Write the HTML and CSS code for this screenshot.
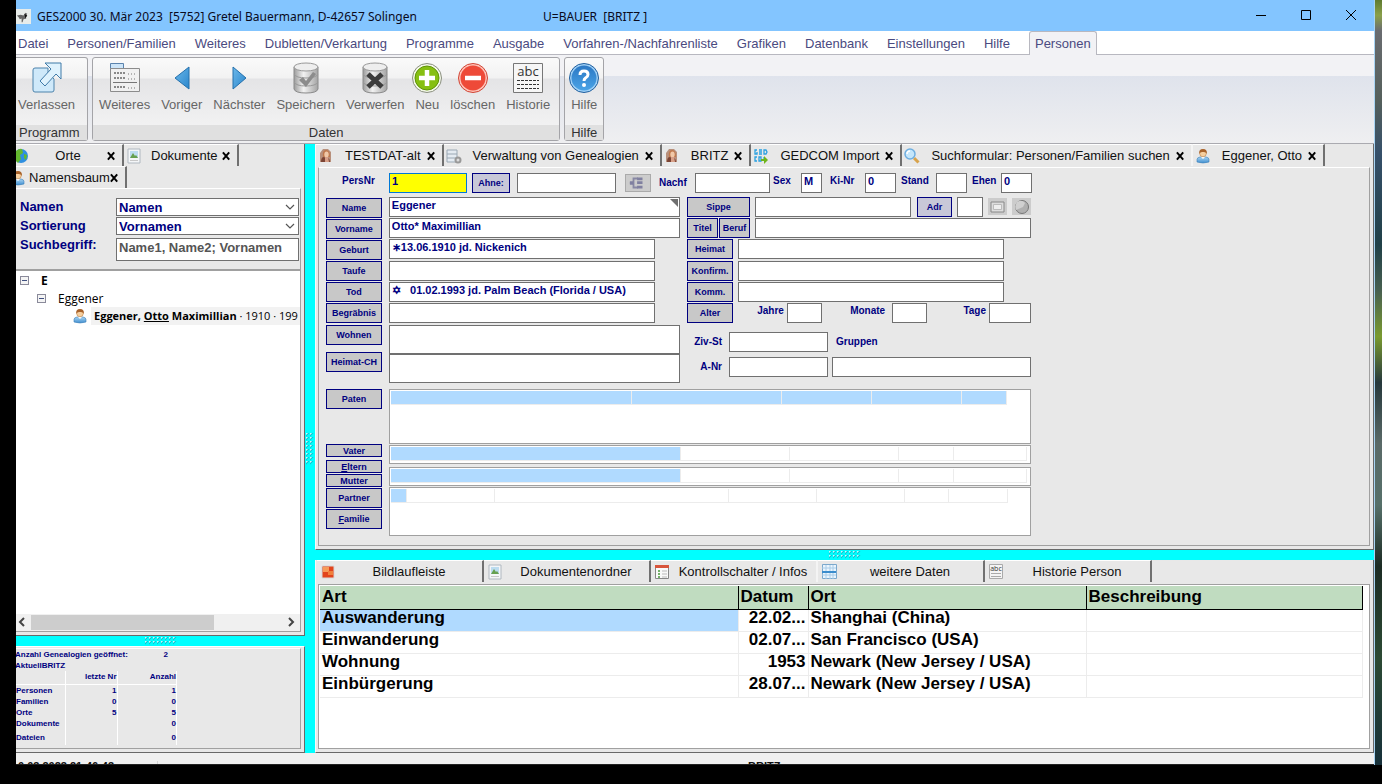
FILE: index.html
```html
<!DOCTYPE html>
<html lang="de">
<head>
<meta charset="utf-8">
<title>GES2000</title>
<link rel="stylesheet" href="styles.css">
</head>
<body>
<svg class="defs" aria-hidden="true">
  <defs>
    <linearGradient id="blueTri" x1="0" y1="0" x2="1" y2="1"><stop offset="0" stop-color="#6cb8ea"/><stop offset="1" stop-color="#2a86cc"/></linearGradient>
    <linearGradient id="cyl" x1="0" x2="1" y1="0" y2="0"><stop offset="0" stop-color="#9c9c9c"/><stop offset=".4" stop-color="#f2f2f2"/><stop offset="1" stop-color="#a4a4a4"/></linearGradient>
    <linearGradient id="helpG" x1="0" x2="0" y1="0" y2="1"><stop offset="0" stop-color="#2b78c4"/><stop offset="1" stop-color="#4aa3e6"/></linearGradient>
    <linearGradient id="shirt" x1="0" x2="0" y1="0" y2="1"><stop offset="0" stop-color="#a9d4f2"/><stop offset="1" stop-color="#3f8fd0"/></linearGradient>
  </defs>
  <symbol id="person" viewBox="0 0 16 16"><path d="M2 14V11.500Q2 9.500 5 9h6q3 .5 3 2.500V14q-6 2-12 0z" fill="url(#shirt)" stroke="#3c7fb8" stroke-width=".6"/><path d="M6 9l2 2 2-2z" fill="#fff"/><circle cx="8" cy="5.500" r="3.300" fill="#f6cf9f" stroke="#b87733" stroke-width=".5"/><path d="M4.300 6Q3.500 1 8 1t3.800 5Q11 3.500 8 4 5 3.500 4.300 6z" fill="#a8622a"/></symbol>
  <symbol id="portrait" viewBox="0 0 16 16"><path d="M2 14V5l3-4h5l3 3v10z" fill="#b8907c"/><path d="M3 14q0-4 2-5l5 1q2 1 2 4z" fill="#7c4434"/><path d="M5 9q-1-7 3-7t4 7z" fill="#c0784c"/><ellipse cx="8.500" cy="6.500" rx="2.200" ry="3" fill="#f0c8a8"/><path d="M7 9h3l1 5H7z" fill="#d8a088"/></symbol>
  <symbol id="picdoc" viewBox="0 0 16 16"><path d="M2 1h12v14H2z" fill="#f4f6f8" stroke="#b0b8c0"/><path d="M4 3h8v7H4z" fill="#bcdcf0"/><path d="M4 10l3-5 2 3 1-1 2 3z" fill="#66a050"/><path d="M4 12.500h8" stroke="#c8c8c8"/></symbol>
  <symbol id="close" viewBox="0 0 10 10"><path d="M1 1l7 8M8 1L1 9" stroke="#000" stroke-width="2.200"/></symbol>
  <symbol id="chev" viewBox="0 0 12 8"><path d="M2 2l4 4 4-4" fill="none" stroke="#555" stroke-width="1.200"/></symbol>
</svg>
<div class="desktop">
<div class="window">
  <header class="titlebar">
    <svg class="appicon" viewBox="0 0 16 16"><path d="M0 0h16v16H0z" fill="#e8ecea"/><path d="M1 7l4-1 3 1 2-3 2 1-2 3 1 2-3 1-1 3-1 0 0-4-2 1-1-2z" fill="#666"/><path d="M9 5l3 2-2 3z" fill="#111"/></svg>
    <span class="title">GES2000 30. Mär 2023&nbsp; [5752] Gretel Bauermann, D-42657 Solingen</span>
    <span class="user">U=BAUER&nbsp; [BRITZ ]</span>
    <div class="winbtns">
      <button aria-label="Minimieren"><svg viewBox="0 0 12 12"><path d="M1 6.500h10" stroke="#000"/></svg></button>
      <button aria-label="Maximieren"><svg viewBox="0 0 12 12"><path d="M1.500 1.500h9v9h-9z" fill="none" stroke="#000"/></svg></button>
      <button aria-label="Schließen"><svg viewBox="0 0 12 12"><path d="M1 1l10 10M11 1L1 11" stroke="#000"/></svg></button>
    </div>
  </header>
  <nav class="menu">
    <button>Datei</button><button>Personen/Familien</button><button>Weiteres</button><button>Dubletten/Verkartung</button><button>Programme</button><button>Ausgabe</button><button>Vorfahren-/Nachfahrenliste</button><button>Grafiken</button><button>Datenbank</button><button>Einstellungen</button><button>Hilfe</button><button class="active">Personen</button>
  </nav>
  <section class="ribbon">
    <div class="group first">
      <div class="tools">
        <button><svg viewBox="0 0 34 34"><path d="M3 9q0-2 2-2h13v5l6 6v11q0 2-2 2H5q-2 0-2-2z" fill="#cfe9fa" stroke="#4d83ac"/><path d="M15 2h16v16l-5-5-11 12-5-5 11-12z" fill="#dff2fd" stroke="#3f7aa8"/></svg>Verlassen</button>
      </div>
      <div class="caption">Programm</div>
    </div>
    <div class="group">
      <div class="tools wide">
        <button><svg viewBox="0 0 34 34"><path d="M2.500 2.500h13v6h-13z" fill="#cde5f8" stroke="#5b83ad"/><path d="M2.500 7.500h29v23h-29z" fill="#f0f0f0" stroke="#8c8c8c"/><path d="M5 21.500h24" stroke="#777"/><path d="M6 12h11M6 17h11M6 26h11" stroke="#888" stroke-width="2" stroke-dasharray="2 1"/><path d="M20 13h8M20 18h8M20 27h8" stroke="#777" stroke-dasharray="1 2"/></svg>Weiteres</button>
        <button><svg viewBox="0 0 34 34"><path d="M24 6v22L10 17z" fill="url(#blueTri)" stroke="#2470ac"/></svg>Voriger</button>
        <button><svg viewBox="0 0 34 34"><path d="M11 6v22l13-11z" fill="url(#blueTri)" stroke="#2470ac"/></svg>Nächster</button>
        <button><svg viewBox="0 0 34 34"><path d="M5 6v22q1 4 12 4t12-4V6z" fill="url(#cyl)" stroke="#8a8a8a"/><path d="M5 13q2 4 12 4t12-4M5 21q2 4 12 4t12-4" fill="none" stroke="#999"/><ellipse cx="17" cy="6" rx="12" ry="4" fill="#eee" stroke="#999"/><path d="M10 19l4-3 3 4 7-9 3 2-10 13z" fill="#8c8c8c"/></svg>Speichern</button>
        <button><svg viewBox="0 0 34 34"><path d="M5 6v22q1 4 12 4t12-4V6z" fill="url(#cyl)" stroke="#8a8a8a"/><path d="M5 13q2 4 12 4t12-4M5 21q2 4 12 4t12-4" fill="none" stroke="#999"/><ellipse cx="17" cy="6" rx="12" ry="4" fill="#eee" stroke="#999"/><path d="M10 13l14 13M24 13L10 26" stroke="#3c3c3c" stroke-width="5"/></svg>Verwerfen</button>
        <button><svg viewBox="0 0 34 34"><circle cx="17" cy="17" r="14.500" fill="#f4f8e8" stroke="#8a8f80"/><circle cx="17" cy="17" r="12" fill="#86bf12" stroke="#5f9408"/><path d="M17 9v16M9 17h16" stroke="#fff" stroke-width="4.500"/></svg>Neu</button>
        <button><svg viewBox="0 0 34 34"><circle cx="17" cy="17" r="14.500" fill="#ffc4ba" stroke="#d04434"/><circle cx="17" cy="17" r="12.500" fill="#ee4a38"/><path d="M9 17h16" stroke="#fff" stroke-width="4.500"/></svg>löschen</button>
        <button><svg viewBox="0 0 34 34"><path d="M2.500 2.500h29v29h-29z" fill="#f6f6f6" stroke="#777"/><text x="17" y="15" text-anchor="middle" class="abc">abc</text><path d="M6 19.500h22M6 23.500h22M6 27.500h22" stroke="#333" stroke-dasharray="3 1"/></svg>Historie</button>
      </div>
      <div class="caption">Daten</div>
    </div>
    <div class="group">
      <div class="tools">
        <button><svg viewBox="0 0 34 34"><circle cx="17" cy="17" r="14.500" fill="#9fd0f6" stroke="#205f9e"/><circle cx="17" cy="17" r="12.500" fill="url(#helpG)"/><path d="M13 14q0-4 4-4t4 3.500q0 2-2.500 3.500-1.500 1-1.500 3" fill="none" stroke="#fff" stroke-width="3"/><circle cx="17" cy="24" r="2" fill="#fff"/></svg>Hilfe</button>
      </div>
      <div class="caption">Hilfe</div>
    </div>
  </section>

  <main class="work">
    <div class="left">
      <section class="panel tree-panel">
        <div class="tabs">
          <div class="tab orte"><svg class="ic" viewBox="0 0 16 16"><circle cx="8" cy="8" r="7" fill="#2f8fe0"/><path d="M2 4q4-4 7-3l1 4-3 2 1 4-3 4-3-3zM11 6l3 1-1 5-2-2z" fill="#63b82e"/></svg><span>Orte</span><button class="x" aria-label="Orte schließen"><svg><use href="#close"/></svg></button></div>
          <div class="tab"><svg class="ic"><use href="#picdoc"/></svg><span>Dokumente</span><button class="x tight" aria-label="Dokumente schließen"><svg><use href="#close"/></svg></button></div>
        </div>
        <div class="tabs">
          <div class="tab names"><svg class="ic"><use href="#person"/></svg><span>Namensbaum</span><button class="x" aria-label="Namensbaum schließen"><svg><use href="#close"/></svg></button></div>
        </div>
        <div class="page tree-page">
          <div class="search">
            <label for="namen">Namen</label>
            <div class="combo"><select id="namen"><option>Namen</option></select><svg><use href="#chev"/></svg></div>
            <label for="sort">Sortierung</label>
            <div class="combo"><select id="sort"><option>Vornamen</option></select><svg><use href="#chev"/></svg></div>
            <label for="such">Suchbegriff:</label>
            <input id="such" placeholder="Name1, Name2; Vornamen">
          </div>
          <ul class="tree">
            <li><span class="node"></span><b class="letter">E</b></li>
            <li class="l2"><span class="node"></span><span>Eggener</span></li>
            <li class="l3"><svg class="ic"><use href="#person"/></svg><span class="sel"><b>Eggener, <u>Otto</u> Maximillian</b> · 1910 · 199</span></li>
          </ul>
          <div class="scroll"><svg viewBox="0 0 8 10"><path d="M6 1L2 5l4 4" fill="none" stroke="#444" stroke-width="2"/></svg><div class="track"><div class="thumb"></div></div><svg viewBox="0 0 8 10"><path d="M2 1l4 4-4 4" fill="none" stroke="#444" stroke-width="2"/></svg></div>
        </div>
      </section>
      <div class="hsplit"><i class="grip"></i></div>
      <section class="panel stats-panel">
        <div class="page stats">
          <p><span>Anzahl Genealogien geöffnet:</span><span>2</span></p>
          <p>AktuellBRITZ</p>
          <table>
            <thead><tr><th></th><th>letzte Nr</th><th>Anzahl</th></tr></thead>
            <tbody>
              <tr><td>Personen</td><td>1</td><td>1</td></tr>
              <tr><td>Familien</td><td>0</td><td>0</td></tr>
              <tr><td>Orte</td><td>5</td><td>5</td></tr>
              <tr><td>Dokumente</td><td></td><td>0</td></tr>
              <tr class="last"><td>Dateien</td><td></td><td>0</td></tr>
            </tbody>
          </table>
        </div>
      </section>
    </div>
    <div class="vsplit"><i class="grip"></i></div>
    <div class="right">
      <section class="panel form-panel">
        <div class="tabs">
          <div class="tab"><svg class="ic"><use href="#portrait"/></svg><span>TESTDAT-alt</span><button class="x" aria-label="TESTDAT-alt schließen"><svg><use href="#close"/></svg></button></div>
          <div class="tab"><svg class="ic" viewBox="0 0 16 16"><path d="M1 2h10v12H1z" fill="#e4ebf2" stroke="#9aa8b4"/><path d="M1 6h10M1 10h10" stroke="#9aa8b4"/><circle cx="12" cy="12" r="2.500" fill="#ddd" stroke="#999" stroke-width="2"/></svg><span>Verwaltung von Genealogien</span><button class="x" aria-label="Verwaltung schließen"><svg><use href="#close"/></svg></button></div>
          <div class="tab britz"><svg class="ic"><use href="#portrait"/></svg><span>BRITZ</span><button class="x" aria-label="BRITZ schließen"><svg><use href="#close"/></svg></button></div>
          <div class="tab"><svg class="ic" viewBox="0 0 16 16"><path d="M4 2H2v4h2V4M6 2h3M6 4h3M6 6h3M11 2h2l1 2-1 2h-2zM4 9H2v4h2M6 9h2v4H6zM11 9v3" fill="none" stroke="#2aa0e0" stroke-width="1.300"/><path d="M8 11h3V8l4 4-4 4v-3H8z" fill="#6fb51c"/></svg><span>GEDCOM Import</span><button class="x" aria-label="GEDCOM Import schließen"><svg><use href="#close"/></svg></button></div>
          <div class="tab soft"><svg class="ic" viewBox="0 0 16 16"><path d="M10 10l4.500 4.500" stroke="#d8a34c" stroke-width="3"/><circle cx="6" cy="6" r="5" fill="#c4e6fb" stroke="#6faee0" stroke-width="1.500"/><path d="M3 6q0-3 3-3" fill="none" stroke="#fff" stroke-width="1.500"/></svg><span>Suchformular: Personen/Familien suchen</span><button class="x" aria-label="Suchformular schließen"><svg><use href="#close"/></svg></button></div>
          <div class="tab"><svg class="ic"><use href="#person"/></svg><span>Eggener, Otto</span><button class="x" aria-label="Eggener schließen"><svg><use href="#close"/></svg></button></div>
        </div>
        <form class="page form">
          <div class="toprow">
            <label class="persnr" for="pnr">PersNr</label><input id="pnr" class="current w78" value="1">
            <button type="button" class="btn ahne">Ahne:</button><input class="w99" aria-label="Ahne">
            <button type="button" class="icobtn wide" aria-label="Stammbaum"><svg viewBox="0 0 20 14"><path d="M10 2H5v10h5M5 7H1" fill="none" stroke="#8888a4" stroke-width="2"/><path d="M9 1h6v3H9zM9 5h6v3H9zM9 10h6v3H9zM1 5h4v4H1z" fill="#8080a0"/></svg></button>
            <label class="nachf" for="nachf">Nachf</label><input id="nachf" class="w75">
            <label class="sex" for="sex">Sex</label><input id="sex" class="w21" value="M">
            <label class="kinr" for="kinr">Ki-Nr</label><input id="kinr" class="w31" value="0">
            <label class="stand" for="stand">Stand</label><input id="stand" class="w31">
            <label class="ehen" for="ehen">Ehen</label><input id="ehen" class="w31" value="0">
          </div>
          <div class="cols">
            <div class="btncol">
              <button type="button" class="btn">Name</button><button type="button" class="btn">Vorname</button><button type="button" class="btn">Geburt</button><button type="button" class="btn">Taufe</button><button type="button" class="btn">Tod</button><button type="button" class="btn">Begräbnis</button><button type="button" class="btn">Wohnen</button><button type="button" class="btn">Heimat-CH</button>
            </div>
            <div class="fieldcol">
              <div class="corner"><input value="Eggener" aria-label="Name"><i></i></div>
              <input value="Otto* Maximillian" aria-label="Vorname">
              <input class="short" value="∗13.06.1910 jd. Nickenich" aria-label="Geburt">
              <input class="short" aria-label="Taufe">
              <input class="short" value="✡   01.02.1993 jd. Palm Beach (Florida / USA)" aria-label="Tod">
              <input class="short" aria-label="Begräbnis">
              <textarea aria-label="Wohnen"></textarea>
              <textarea aria-label="Heimat-CH"></textarea>
            </div>
            <div class="sidecol">
              <div class="srow"><button type="button" class="btn w63">Sippe</button><input class="w156" aria-label="Sippe"><button type="button" class="btn adr">Adr</button><input class="w26" aria-label="Adresse"><button type="button" class="icobtn" aria-label="Karte"><svg viewBox="0 0 18 16"><path d="M2 3h13v10H2z" fill="#ddd" stroke="#888"/><path d="M4.500 5.500h8v5h-8z" fill="#eee" stroke="#bbb"/></svg></button><button type="button" class="icobtn" aria-label="Globus"><svg viewBox="0 0 18 16"><circle cx="9" cy="8" r="6.500" fill="#b0b0b0" stroke="#777"/><path d="M4 3q5-3 8 1l-2 4-7 3q-2-4 1-8z" fill="#d0d0d0"/></svg></button></div>
              <div class="srow"><div class="pair"><button type="button" class="btn">Titel</button><button type="button" class="btn">Beruf</button></div><input class="grow" aria-label="Titel und Beruf"></div>
              <div class="srow"><button type="button" class="btn w46">Heimat</button><input class="w266" aria-label="Heimat"></div>
              <div class="srow"><button type="button" class="btn w46">Konfirm.</button><input class="w266" aria-label="Konfirmation"></div>
              <div class="srow"><button type="button" class="btn w46">Komm.</button><input class="w266" aria-label="Kommunion"></div>
              <div class="srow age"><button type="button" class="btn w46">Alter</button><div><label for="jahre">Jahre</label><input id="jahre" class="w35"></div><div><label for="monate">Monate</label><input id="monate" class="w35"></div><div><label for="tage">Tage</label><input id="tage" class="w42"></div></div>
              <div class="srow civ"><label for="ziv">Ziv-St</label><input id="ziv" class="w99"><label class="grp" for="gruppen">Gruppen</label></div>
              <div class="srow civ"><label for="anr">A-Nr</label><input id="anr" class="w99"><input id="gruppen" class="grow"></div>
            </div>
          </div>
          <div class="lists">
            <div class="btncol2">
              <button type="button" class="btn">Paten</button><button type="button" class="btn low">Vater</button><button type="button" class="btn low"><u>E</u>ltern</button><button type="button" class="btn low">Mutter</button><button type="button" class="btn">Partner</button><button type="button" class="btn"><u>F</u>amilie</button>
            </div>
            <div class="gridcol">
              <div class="mini paten"><table><colgroup><col class="c240"><col class="c150"><col class="c90"><col class="c90"><col class="c45"></colgroup><tr><td></td><td></td><td></td><td></td><td></td></tr></table></div>
              <div class="mini"><table><colgroup><col class="c289"><col class="c109"><col class="c109"><col class="c55"><col class="c73"></colgroup><tr><td class="on"></td><td></td><td></td><td></td><td></td></tr></table></div>
              <div class="mini mutter"><table><colgroup><col class="c289"><col class="c109"><col class="c109"><col class="c55"><col class="c73"></colgroup><tr><td class="on"></td><td></td><td></td><td></td><td></td></tr></table></div>
              <div class="mini partner"><table><colgroup><col class="c15"><col class="c88"><col class="c234"><col class="c88"><col class="c88"><col class="c44"><col class="c59"></colgroup><tr><td class="on"></td><td></td><td></td><td></td><td></td><td></td><td></td></tr></table></div>
            </div>
          </div>
        </form>
      </section>
      <div class="hsplit"><i class="grip"></i></div>
      <section class="panel data-panel">
        <div class="tabs even">
          <button class="tab"><svg class="ic" viewBox="0 0 16 16"><path d="M2 2h12v12H2z" fill="#e2441c" stroke="#d8d8d8"/><path d="M3 3h6v5H3z" fill="#f79a58"/><path d="M8 7h5v4H8z" fill="#f0803c"/></svg><span>Bildlaufleiste</span></button>
          <button class="tab"><svg class="ic"><use href="#picdoc"/></svg><span>Dokumentenordner</span></button>
          <button class="tab soft"><svg class="ic" viewBox="0 0 16 16"><path d="M1.500 1.500h13v13h-13z" fill="#fafafa" stroke="#888"/><path d="M1 1h14v3H1z" fill="#d8553c"/><path d="M4 7h2M4 10h2M4 13h2" stroke="#4a9a3a" stroke-width="1.500"/><path d="M8 7h5M8 10h5M8 13h5" stroke="#bbb"/></svg><span>Kontrollschalter / Infos</span></button>
          <button class="tab"><svg class="ic" viewBox="0 0 16 16"><path d="M1.500 .5h14v14h-14z" fill="#eaf5fd" stroke="#7aa8cc"/><path d="M1 4h14M1 11h14M5 1v14M9 1v14M12 1v14" stroke="#a8cce8"/><path d="M1 8h14" stroke="#3a8ccc" stroke-width="2"/></svg><span>weitere Daten</span></button>
          <button class="tab"><svg class="ic" viewBox="0 0 16 16"><path d="M1.500 .5h13v14h-13z" fill="#f4f4f4" stroke="#aaa"/><text x="8" y="7" text-anchor="middle" class="abc small">abc</text><path d="M3 9.500h10M3 12.500h10" stroke="#aaa"/></svg><span>Historie Person</span></button>
        </div>
        <div class="page sheet">
          <table>
            <colgroup><col class="art"><col class="datum"><col class="ort"><col></colgroup>
            <thead><tr><th>Art</th><th>Datum</th><th>Ort</th><th>Beschreibung</th></tr></thead>
            <tbody>
              <tr><td class="on">Auswanderung</td><td>22.02...</td><td>Shanghai (China)</td><td></td></tr>
              <tr><td>Einwanderung</td><td>02.07...</td><td>San Francisco (USA)</td><td></td></tr>
              <tr><td>Wohnung</td><td>1953</td><td>Newark (New Jersey / USA)</td><td></td></tr>
              <tr><td>Einbürgerung</td><td>28.07...</td><td>Newark (New Jersey / USA)</td><td></td></tr>
            </tbody>
          </table>
        </div>
      </section>
    </div>
  </main>
  <footer class="status"><span class="time">0.03.2023 21:46:43</span><span class="db">BRITZ</span></footer>
</div>
<div class="wallpaper"></div>
</div>
</body>
</html>
```
FILE: styles.css
```css
* { box-sizing: border-box; }
body { margin: 0; background: #000; font-family: "Liberation Sans", Arial, sans-serif; font-size: 13px; color: #111; }
button, input, select, textarea { font: inherit; color: inherit; margin: 0; padding: 0; border: 0; background: none; border-radius: 0; outline: 0; }
button { white-space: nowrap; }
.defs { position: absolute; width: 0; height: 0; }
.desktop { display: flex; height: 100vh; padding: 0 0 19px 16px; overflow: hidden; }
.window { flex: 1; min-width: 0; display: flex; flex-direction: column; background: #e8e8e8; border-right: 1px solid #a8d4f4; overflow: hidden; }
.wallpaper { width: 7px; background: linear-gradient(#5e7a30 0, #8aa04a 2%, #6a6c70 4%, #55605c 13%, #36506a 20%, #204048 32%, #486050 38%, #7a9a30 44%, #26383c 50%, #5a6a68 58%, #56706a 66%, #1c2c24 74%, #2c4a34 86%, #16303a 100%); }

.titlebar { display: flex; align-items: center; height: 31px; padding-top: 1px; background: #83c5ff; font: 12px "Noto Sans", "Open Sans", sans-serif; color: #0a0a1c; }
.appicon { width: 15px; height: 15px; margin-right: 6px; }
.title { width: 506px; white-space: nowrap; }
.user { flex: 1; white-space: nowrap; }
.winbtns { display: flex; margin-right: 1px; }
.winbtns button { width: 45px; height: 31px; }
.winbtns svg { width: 12px; height: 12px; }

.menu { display: flex; gap: 19px; height: 24px; padding-left: 2px; background: #fff; border-bottom: 1px solid #b8b8c0; color: #4a4a80; }
.menu button { height: 24px; }
.menu .active { background: #f2f2f5; border: 1px solid #b8b8c0; border-bottom: 0; border-radius: 3px 3px 0 0; padding: 0 5px; }

.ribbon { display: flex; gap: 4px; height: 89px; padding: 2px 0 2px; background: linear-gradient(#f2f2f5 0, #f2f2f5 21px, #dfe3ec 21px, #efeff1 100%); border-bottom: 1px solid #aaaab0; }
.group { display: flex; flex-direction: column; border: 1px solid #a4a4a8; border-radius: 3px; background: linear-gradient(#fafafa 0, #f2f2f2 20px, #e4e4e6 21px, #f6f6f6 100%); }
.group.first { border-left: 0; border-radius: 0 3px 3px 0; }
.tools { flex: 1; display: flex; gap: 11px; padding: 3px 6px 0; color: #666; }
.first .tools { padding: 3px 12px 0 2px; }
.tools.wide { padding-right: 9px; }
.tools button { display: flex; flex-direction: column; align-items: center; gap: 2px; line-height: 15px; height: 54px; }
.tools svg { width: 34px; height: 34px; margin: 0 -6px; }
.caption { height: 15px; line-height: 15px; text-align: center; background: #e0e0e0; color: #333; }
.first .caption { text-align: left; padding-left: 3px; }
.abc { font: 13px "Open Sans", sans-serif; fill: #333; }
.abc.small { font-size: 7px; }

.work { flex: 1; min-height: 0; display: flex; background: #0ff; }
.left { width: 289px; display: flex; flex-direction: column; }
.right { flex: 1; min-width: 0; display: flex; flex-direction: column; }
.vsplit { width: 10px; display: flex; align-items: center; justify-content: center; background: #0ff; }
.hsplit { height: 10px; display: flex; align-items: center; justify-content: center; background: #0ff; }
.grip { width: 32px; height: 8px; background: linear-gradient(135deg, #c8fcff 0, #c8fcff 1px, #10c0cc 2px, #0ff 3px) 0 0 / 4px 4px; }
.vsplit .grip { width: 8px; height: 32px; }
.panel { display: flex; flex-direction: column; background: #e8e8e8; border-right: 1px solid #696969; border-bottom: 1px solid #696969; overflow: hidden; }
.right .panel { border-left: 1px solid #f8f8f8; }
.page { border: 1px solid #a0a0a0; border-top-color: #fff; }

.tabs { display: flex; height: 22px; }
.tab { display: flex; align-items: center; padding: 1px 6px 1px 2px; border-right: 2px solid #707070; border-top: 1px solid #fff; height: 22px; white-space: nowrap; }
.tab.soft { border-right-color: #f4f4f4; }
.tab span { margin-left: 11px; }
.left .tab span { margin-left: 9px; }
.ic { width: 16px; height: 16px; flex: none; }
.x { width: 9px; height: 10px; margin-left: 6px; display: flex; }
.x svg { width: 9px; height: 10px; }
.x.tight { margin-left: 5px; }
.tab.orte { width: 108px; padding-left: 0; }
.orte .ic { margin-left: -3px; }
.left .orte span { margin: 0 auto; padding-left: 6px; }
.tab.names { padding: 1px 6px 1px 0; }
.names .ic { margin-left: -6px; }
.left .names span { margin-left: 3px; }
.names .x { margin-left: 0; }

.tree-panel { flex: 1; }
.tree-page { flex: 1; display: flex; flex-direction: column; margin: 0 3px 3px 0; border-left: 0; }
.search { display: grid; grid-template-columns: 96px 1fr; row-gap: 1px; padding: 9px 1px 8px 4px; border-bottom: 2px solid #a0a0a0; font-weight: bold; color: #000080; }
.search label { line-height: 18px; }
.combo { display: grid; height: 18px; }
.combo > * { grid-area: 1 / 1; }
.combo select { appearance: none; background: #fff; border: 1px solid #707070; padding-left: 2px; width: 100%; height: 18px; }
.combo svg { width: 12px; height: 8px; justify-self: end; align-self: center; margin-right: 3px; }
.search input { height: 23px; margin-top: 2px; background: #fff; border: 1px solid #707070; padding: 0 0 4px 2px; min-width: 0; }
.search input::placeholder { color: #555; opacity: 1; }
.tree { flex: 1; margin: 0; padding: 0; list-style: none; background: #fff; font: 12px "Open Sans", "Noto Sans", sans-serif; color: #000; overflow: hidden; }
.tree li { display: flex; align-items: center; height: 18px; padding-left: 4px; white-space: nowrap; }
.tree .l2 { padding-left: 21px; }
.tree .l3 { padding-left: 56px; }
.tree .letter { margin-left: 12px; }
.l2 span + span { margin-left: 12px; }
.node { width: 9px; height: 9px; border: 1px solid #8a8a9a; background: linear-gradient(#405080, #405080) center / 5px 1px no-repeat #f4f4f4; }
.sel { margin-left: 3px; padding-left: 3px; background: #f2f2f2; flex: 1; font-size: 11px; line-height: 18px; }
.scroll { display: flex; align-items: center; gap: 5px; height: 17px; padding: 0 5px 0 2px; background: #f0f0f0; }
.scroll svg { width: 8px; height: 10px; }
.track { flex: 1; height: 15px; }
.thumb { width: 73%; height: 15px; background: #cdcdcd; }

.stats-panel { border-top: 1px solid #fff; }
.stats { margin: 1px 3px 3px 0; padding-bottom: 3px; border-left: 0; font-size: 8px; font-weight: bold; color: #000080; line-height: 11px; white-space: nowrap; }
.stats p { display: flex; margin: 0 0 0 -1px; width: 153px; justify-content: space-between; }
.stats table { border-collapse: collapse; table-layout: fixed; width: 161px; }
.stats th, .stats td { padding: 0; height: 11px; text-align: right; border-right: 1px solid #fff; }
.stats th { height: 14px; vertical-align: top; border-bottom: 1px solid #fff; }
.stats th:first-child, .stats td:first-child { width: 49px; text-align: left; }
.stats th:nth-child(2) { width: 52px; }
.stats .last td { height: 16px; }

.form-panel { flex: none; }
.form { margin: 1px 3px 3px 2px; padding: 5px 8px 9px 7px; font-size: 10px; font-weight: bold; color: #000080; }
.form input, .form textarea { display: block; height: 20px; border: 1px solid #707070; background: #fff; padding: 0 2px 4px; font-size: 11px; min-width: 0; resize: none; flex: none; }
.form textarea { height: 29px; }
.form label { line-height: 16px; white-space: nowrap; }
.btn { height: 20px; border: 1px solid #000080; background: #c8c8c8; font-size: 9px; font-weight: bold; color: #000080; text-align: center; flex: none; }
.ahne, .adr { background: #c8c8d8; }
.icobtn { width: 19px; height: 17px; background: #ccc; flex: none; display: flex; align-items: center; justify-content: center; }
.icobtn svg { width: 18px; height: 16px; }
.icobtn.wide { width: 26px; height: 18px; border: 1px solid #aaa; margin: 1px 8px 0 9px; }
.toprow { display: flex; height: 24px; }
.persnr { width: 63px; padding-left: 16px; }
.form .current { background: #ff0; border-color: #0078d7; }
.current::selection { background: #0078d7; color: #fff; }
.ahne { width: 38px; margin: 0 7px 0 5px; }
.nachf { width: 36px; padding-top: 2px; }
.sex { width: 31px; padding-left: 3px; }
.kinr { width: 43px; padding-left: 8px; }
.stand { width: 40px; padding-left: 5px; }
.ehen { width: 34px; padding-left: 5px; }
.form .grow { flex: 1; }
.w21 { width: 21px; } .w26 { width: 26px; } .w31 { width: 31px; } .w35 { width: 35px; } .w42 { width: 42px; }
.w46 { width: 46px; } .w63 { width: 63px; } .w75 { width: 75px; } .w78 { width: 78px; } .w99 { width: 99px; } .w156 { width: 156px; } .w266 { width: 266px; }
.cols { display: flex; width: 705px; }
.btncol { display: grid; width: 56px; align-content: start; align-items: start; padding-top: 1px; grid-template-rows: 21px 21px 21px 21px 21px 22px 27px 20px; }
.fieldcol { display: grid; width: 292px; margin: 0 7px; align-items: start; align-content: start; grid-template-rows: 21px 21px 22px 21px 21px 22px 29px 35px; }
.fieldcol > * { width: 100%; }
.form .fieldcol .short { width: 266px; }
.corner { display: grid; }
.corner > * { grid-area: 1 / 1; }
.corner i { width: 0; height: 0; justify-self: end; margin: 2px 2px 0 0; border-left: 8px solid transparent; border-top: 8px solid #707070; }
.sidecol { flex: 1; display: grid; align-items: start; align-content: start; grid-template-rows: 21px 21px 22px 21px 21px 29px 25px 20px; }
.srow { display: flex; gap: 5px; }
.adr { width: 35px; margin: 0 0 0 1px; }
.srow .icobtn { margin-top: 1px; }
.pair { display: flex; gap: 1px; width: 63px; }
.pair .btn { width: 31px; }
.age { justify-content: space-between; }
.age div { display: flex; gap: 3px; }
.age div:nth-child(2) { margin-left: 18px; }
.age div:nth-child(3) { gap: 7px; margin-left: 22px; }
.age div:nth-child(4) { margin-left: 30px; }
.civ { gap: 4px; }
.civ label:first-child { width: 38px; padding: 2px 3px 0 0; text-align: right; }
.civ .grp { padding: 2px 0 0 4px; }
.lists { display: flex; gap: 7px; width: 705px; }
.btncol2 { display: grid; width: 56px; align-content: start; align-items: start; grid-template-rows: 55px 16px 14px 14px 21px 20px; }
.low { height: 13px; line-height: 10px; }
.gridcol { flex: 1; display: flex; flex-direction: column; gap: 1px; }
.mini { height: 19px; border: 1px solid #a0a0a0; background: #fff; padding: 1px; }
.mini.mutter { margin-top: 2px; }
.mini.paten { height: 55px; }
.mini.partner { height: 49px; }
.mini table { border-collapse: collapse; table-layout: fixed; width: 1px; }
.mini td { height: 13px; padding: 0; border-right: 1px solid #ececec; border-bottom: 1px solid #ececec; }
.mini .on, .paten td { background: #b0daff; }
.c15 { width: 15px; } .c44 { width: 44px; } .c45 { width: 45px; } .c55 { width: 55px; } .c59 { width: 59px; } .c73 { width: 73px; } .c88 { width: 88px; } .c90 { width: 90px; } .c109 { width: 109px; } .c150 { width: 150px; } .c234 { width: 234px; } .c240 { width: 240px; } .c289 { width: 289px; }

.data-panel { flex: 1; }
.data-panel .tabs { padding-left: 1px; }
.even .tab { width: 167px; padding: 1px 0 1px 3px; }
.even .tab span { flex: 1; margin: 0; text-align: center; }
.sheet { flex: 1; margin: 2px 3px 3px 2px; border-top-color: #a0a0a0; padding: 1px 6px 0 1px; background: #fff; }
.sheet table { width: 100%; table-layout: fixed; border-collapse: collapse; font-size: 17px; font-weight: bold; color: #000; }
.sheet th { height: 23px; padding: 0 2px; text-align: left; line-height: 20px; background: #c0dcc0; border-right: 1px solid #000; border-bottom: 1px solid #000; }
.sheet td { height: 22px; padding: 0 2px 5px; line-height: 16px; border-right: 1px solid #ececec; border-bottom: 1px solid #ececec; white-space: nowrap; }
.sheet td:nth-child(2) { text-align: right; }
.sheet .on { background: #b0daff; }
.art { width: 418px; } .datum { width: 70px; } .ort { width: 278px; }

.status { display: flex; height: 12px; padding-top: 8px; overflow: hidden; background: #f0f0f0; border-bottom: 1px solid #222; font-size: 11px; font-weight: bold; line-height: 11px; }
.time { width: 142px; padding-left: 2px; border-right: 1px solid #d4d4d4; }
.db { margin-left: 590px; }
```
